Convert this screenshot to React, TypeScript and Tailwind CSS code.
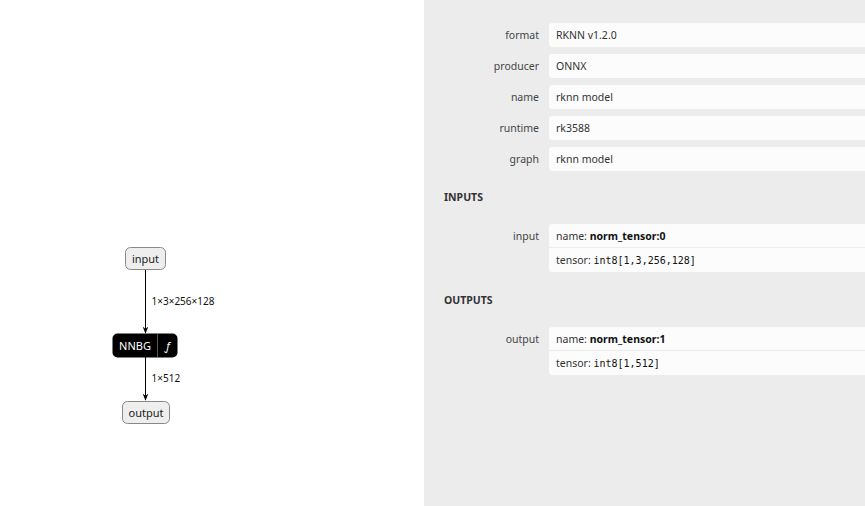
const font = { fontFamily: '"Noto Sans", "Open Sans", sans-serif' };
const mono = { fontFamily: '"DejaVu Sans Mono", "Liberation Mono", monospace' };

type Prop = { label: string; value: string };

const modelProps: Prop[] = [
  { label: 'format', value: 'RKNN v1.2.0' },
  { label: 'producer', value: 'ONNX' },
  { label: 'name', value: 'rknn model' },
  { label: 'runtime', value: 'rk3588' },
  { label: 'graph', value: 'rknn model' },
];

type Arg = { label: string; name: string; type: string; shape: string };

const inputs: Arg[] = [{ label: 'input', name: 'norm_tensor:0', type: 'int8', shape: '[1,3,256,128]' }];
const outputs: Arg[] = [{ label: 'output', name: 'norm_tensor:1', type: 'int8', shape: '[1,512]' }];

function Graph() {
  return (
    <svg width="424" height="506" className="block">
      <defs>
        <marker id="arrowhead" viewBox="0 0 10 10" refX="9" refY="5" markerWidth="7" markerHeight="7" orient="auto">
          <path d="M0,1 L10,5 L0,9 L3,5 z" fill="#000" />
        </marker>
      </defs>
      <g fontFamily='"Noto Sans", "Open Sans", sans-serif'>
        {/* edges */}
        <line x1="145.5" y1="269" x2="145.5" y2="333" stroke="#000" strokeWidth="1" markerEnd="url(#arrowhead)" />
        <line x1="145.5" y1="357" x2="145.5" y2="400" stroke="#000" strokeWidth="1" markerEnd="url(#arrowhead)" />
        <text x="151.5" y="305" fontSize="10" fill="#111">1×3×256×128</text>
        <text x="151.5" y="382" fontSize="10" fill="#111">1×512</text>

        {/* input */}
        <rect x="125.5" y="247.5" width="40" height="22" rx="5" fill="#eee" stroke="#888" />
        <text x="145.5" y="262.5" fontSize="11" textAnchor="middle" fill="#222">input</text>

        {/* NNBG */}
        <rect x="112.5" y="333.5" width="65" height="24" rx="5" fill="#000" />
        <line x1="157.5" y1="334" x2="157.5" y2="357" stroke="#555" />
        <text x="135" y="349.5" fontSize="11" textAnchor="middle" fill="#fff">NNBG</text>
        <text x="167.5" y="349.5" fontSize="11" textAnchor="middle" fill="#fff" fontStyle="italic">ƒ</text>

        {/* output */}
        <rect x="122.5" y="401.5" width="47" height="22" rx="5" fill="#eee" stroke="#888" />
        <text x="146" y="416.5" fontSize="11" textAnchor="middle" fill="#222">output</text>
      </g>
    </svg>
  );
}

function PropRow({ label, children }: { label: string; children: React.ReactNode }) {
  return (
    <div className="flex">
      <div className="w-[95px] shrink-0 text-right text-[10.5px] text-[#444] h-[24px] leading-[24px]">{label}</div>
      <div className="ml-[10px] flex-1">{children}</div>
    </div>
  );
}

function ArgBox({ arg }: { arg: Arg }) {
  return (
    <div className="rounded-l-[3px] bg-[#fcfcfc] text-[10.5px] text-[#333]">
      <div className="h-[24px] leading-[24px] px-[7px] border-b border-[#ececec]">
        name: <span className="font-bold text-[#111]">{arg.name}</span>
      </div>
      <div className="h-[24px] leading-[24px] px-[7px]">
        tensor:{' '}
        <span className="text-[10px] text-[#111]" style={mono}>
          {arg.type}
          {arg.shape}
        </span>
      </div>
    </div>
  );
}

function Section({ title, args, top }: { title: string; args: Arg[]; top: string }) {
  return (
    <>
      <div className={`${top} mb-[17px] h-[20px] leading-[20px] text-[10.5px] font-bold text-[#333]`}>{title}</div>
      {args.map((a) => (
        <PropRow key={a.label} label={a.label}>
          <ArgBox arg={a} />
        </PropRow>
      ))}
    </>
  );
}

export default function App() {
  return (
    <div className="flex w-[865px] h-[506px] overflow-hidden bg-white" style={font}>
      <div className="w-[424px] shrink-0">
        <Graph />
      </div>
      <div className="flex-1 bg-[#ececec] pl-[20px] pt-[23px]">
        <div className="flex flex-col gap-[7px]">
          {modelProps.map((p) => (
            <PropRow key={p.label} label={p.label}>
              <div className="h-[24px] leading-[24px] rounded-l-[3px] bg-[#fcfcfc] px-[7px] text-[10.5px] text-[#333]">{p.value}</div>
            </PropRow>
          ))}
        </div>
        <Section title="INPUTS" args={inputs} top="mt-[16px]" />
        <Section title="OUTPUTS" args={outputs} top="mt-[18px]" />
      </div>
    </div>
  );
}
